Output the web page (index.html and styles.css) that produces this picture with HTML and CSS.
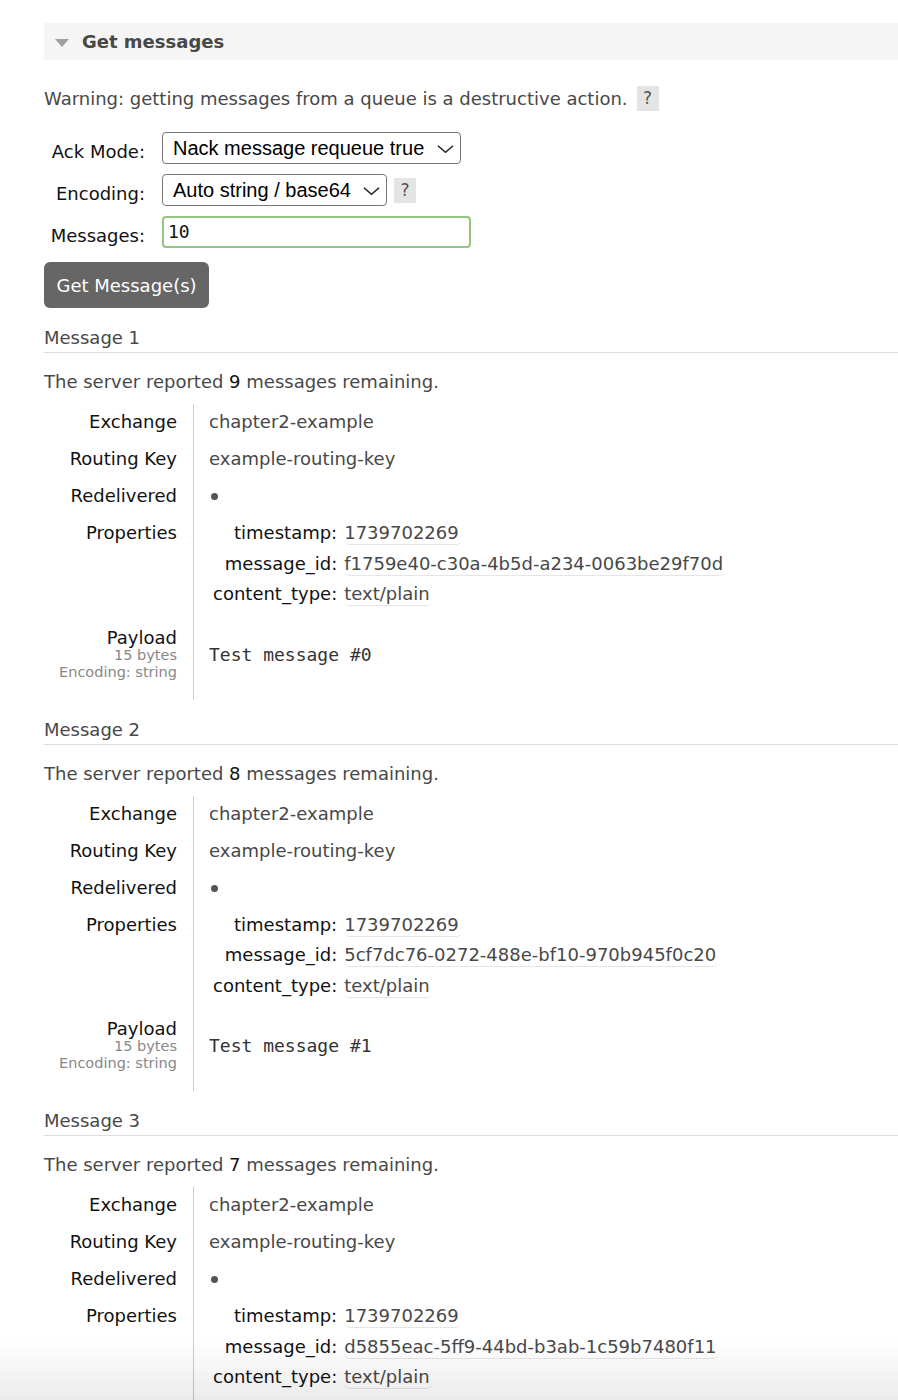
FILE: index.html
```html
<!DOCTYPE html>
<html>
<head>
<meta charset="utf-8">
<link rel="stylesheet" href="styles.css">
</head>
<body>
<div class="section">
  <h2 class="section-head"><span class="tri"></span>Get messages</h2>
  <p class="warn">Warning: getting messages from a queue is a destructive action. <span class="help">?</span></p>
  <div class="form">
    <div class="flabel">Ack Mode:</div>
    <div class="fctl"><div class="select sel-ack">Nack message requeue true<svg class="chev" viewBox="0 0 18 10"><path d="M1 1.5 L9 8.5 L17 1.5" fill="none" stroke="#222" stroke-width="1.6"/></svg></div></div>
    <div class="flabel">Encoding:</div>
    <div class="fctl"><div class="select sel-enc">Auto string / base64<svg class="chev" viewBox="0 0 18 10"><path d="M1 1.5 L9 8.5 L17 1.5" fill="none" stroke="#222" stroke-width="1.6"/></svg></div><span class="help help-sm">?</span></div>
    <div class="flabel">Messages:</div>
    <div class="fctl"><div class="input">10</div></div>
  </div>
  <button class="btn">Get Message(s)</button>

  <div class="msg">
    <h3 class="msg-head">Message 1</h3>
    <p class="remain">The server reported <b>9</b> messages remaining.</p>
    <table class="facts">
      <tr><th>Exchange</th><td>chapter2-example</td></tr>
      <tr><th>Routing Key</th><td>example-routing-key</td></tr>
      <tr><th>Redelivered</th><td><span class="dot"></span></td></tr>
      <tr class="props-row"><th>Properties</th><td>
        <table class="props">
          <tr><th>timestamp:</th><td><span class="pv">1739702269</span></td></tr>
          <tr><th>message_id:</th><td><span class="pv">f1759e40-c30a-4b5d-a234-0063be29f70d</span></td></tr>
          <tr><th>content_type:</th><td><span class="pv">text/plain</span></td></tr>
        </table>
      </td></tr>
      <tr class="payload-row"><th>Payload<div class="sub first">15 bytes</div><div class="sub">Encoding: string</div></th><td><pre class="payload">Test message #0</pre></td></tr>
    </table>
  </div>

  <div class="msg">
    <h3 class="msg-head">Message 2</h3>
    <p class="remain">The server reported <b>8</b> messages remaining.</p>
    <table class="facts">
      <tr><th>Exchange</th><td>chapter2-example</td></tr>
      <tr><th>Routing Key</th><td>example-routing-key</td></tr>
      <tr><th>Redelivered</th><td><span class="dot"></span></td></tr>
      <tr class="props-row"><th>Properties</th><td>
        <table class="props">
          <tr><th>timestamp:</th><td><span class="pv">1739702269</span></td></tr>
          <tr><th>message_id:</th><td><span class="pv">5cf7dc76-0272-488e-bf10-970b945f0c20</span></td></tr>
          <tr><th>content_type:</th><td><span class="pv">text/plain</span></td></tr>
        </table>
      </td></tr>
      <tr class="payload-row"><th>Payload<div class="sub first">15 bytes</div><div class="sub">Encoding: string</div></th><td><pre class="payload">Test message #1</pre></td></tr>
    </table>
  </div>

  <div class="msg">
    <h3 class="msg-head">Message 3</h3>
    <p class="remain">The server reported <b>7</b> messages remaining.</p>
    <table class="facts">
      <tr><th>Exchange</th><td>chapter2-example</td></tr>
      <tr><th>Routing Key</th><td>example-routing-key</td></tr>
      <tr><th>Redelivered</th><td><span class="dot"></span></td></tr>
      <tr class="props-row"><th>Properties</th><td>
        <table class="props">
          <tr><th>timestamp:</th><td><span class="pv">1739702269</span></td></tr>
          <tr><th>message_id:</th><td><span class="pv">d5855eac-5ff9-44bd-b3ab-1c59b7480f11</span></td></tr>
          <tr><th>content_type:</th><td><span class="pv">text/plain</span></td></tr>
        </table>
      </td></tr>
      <tr class="payload-row"><th>Payload<div class="sub first">15 bytes</div><div class="sub">Encoding: string</div></th><td><pre class="payload">Test message #2</pre></td></tr>
    </table>
  </div>
</div>
<div class="fade"></div>
</body>
</html>
```
FILE: styles.css
```css
html, body {
  margin: 0;
  padding: 0;
  background: #fff;
}
body {
  font-family: "DejaVu Sans", Verdana, sans-serif;
  font-size: 18px;
  color: #484848;
  padding: 23px 0 0 44px;
  overflow: hidden;
}
.section-head {
  margin: 0;
  height: 37px;
  background: #f5f5f5;
  display: flex;
  align-items: center;
  font-size: 18px;
  font-weight: bold;
  color: #484848;
  padding-left: 11px;
}
.tri {
  width: 0;
  height: 0;
  border-left: 7px solid transparent;
  border-right: 7px solid transparent;
  border-top: 8px solid #a0a0a0;
  margin-right: 13px;
  margin-top: 2px;
}
.warn {
  margin: 26px 0 0 0;
  line-height: 25px;
  display: flex;
  align-items: center;
  gap: 9px;
}
.help {
  display: inline-block;
  background: #e4e4e4;
  color: #555;
  width: 22px;
  height: 25px;
  line-height: 25px;
  text-align: center;
  font-size: 17px;
}
.form {
  display: grid;
  grid-template-columns: 101px auto;
  column-gap: 17px;
  row-gap: 10px;
  margin-top: 21px;
  align-items: center;
}
.flabel {
  text-align: right;
  color: #111;
  font-size: 18px;
  padding-top: 7px;
}
.fctl {
  display: flex;
  align-items: center;
  gap: 7px;
}
.select {
  box-sizing: border-box;
  height: 32px;
  border: 1px solid #777;
  border-radius: 4px;
  font-family: "Liberation Sans", Arial, sans-serif;
  font-size: 20px;
  color: #000;
  display: flex;
  align-items: center;
  padding-left: 10px;
  justify-content: space-between;
}
.sel-ack { width: 299px; }
.sel-enc { width: 225px; }
.chev {
  width: 17px;
  height: 10px;
  margin-right: 6px;
  margin-top: 1px;
}
.help-sm {
  height: 25px;
  width: 22px;
}
.input {
  box-sizing: border-box;
  width: 309px;
  height: 32px;
  border: 2px solid #93c681;
  border-radius: 4px;
  font-family: "DejaVu Sans Mono", Menlo, monospace;
  font-size: 18px;
  color: #111;
  padding-left: 4px;
  line-height: 28px;
}
.btn {
  display: block;
  margin-top: 14px;
  width: 165px;
  height: 46px;
  border: none;
  border-radius: 6px;
  background: #666;
  color: #fff;
  font-family: "DejaVu Sans", Verdana, sans-serif;
  font-size: 18px;
  padding: 0;
}
.msg-head {
  margin: 19px 0 0 0;
  font-weight: normal;
  font-size: 18px;
  color: #484848;
  line-height: 22px;
  padding-bottom: 3px;
  border-bottom: 1px solid #ddd;
}
.remain {
  margin: 18px 0 0 0;
  line-height: 22px;
}
.remain b {
  font-weight: normal;
  color: #111;
}
.facts {
  border-collapse: collapse;
  margin-top: 11px;
}
.facts > tbody > tr > th {
  width: 133px;
  text-align: right;
  font-weight: normal;
  color: #111;
  padding: 7px 16px 8px 0;
  line-height: 22px;
  vertical-align: top;
  border-right: 1px solid #ccc;
}
.facts > tbody > tr > td {
  padding: 7px 0 8px 15px;
  line-height: 22px;
  vertical-align: top;
}
.dot {
  display: inline-block;
  width: 7px;
  height: 7px;
  border-radius: 50%;
  background: #555;
  margin: 8px 0 0 2px;
  vertical-align: top;
}
.props {
  border-collapse: collapse;
}
.props th {
  text-align: right;
  font-weight: normal;
  color: #111;
  padding: 0 7px 0 4px;
  line-height: 22px;
  height: 30.5px;
  vertical-align: top;
}
.props td {
  padding: 0;
  vertical-align: top;
  line-height: 22px;
}
.pv {
  display: inline-block;
  border-bottom: 1px dotted #ccc;
  border-radius: 0 0 5px 5px;
  padding-right: 2px;
}
.props-row > td {
  padding-bottom: 6px !important;
}
.sub {
  font-size: 14.5px;
  color: #888;
  line-height: 17px;
}
.sub.first {
  margin-top: -2px;
}
.payload-row > th,
.payload-row > td {
  padding-bottom: 19px !important;
}
.payload {
  margin: 17px 0 0 0;
  font-family: "DejaVu Sans Mono", Menlo, monospace;
  font-size: 18px;
  color: #333;
  line-height: 22px;
}
.fade {
  position: fixed;
  left: 0;
  right: 0;
  bottom: 0;
  height: 60px;
  background: linear-gradient(to bottom, rgba(0,0,0,0), rgba(0,0,0,0.08));
  pointer-events: none;
}
```
